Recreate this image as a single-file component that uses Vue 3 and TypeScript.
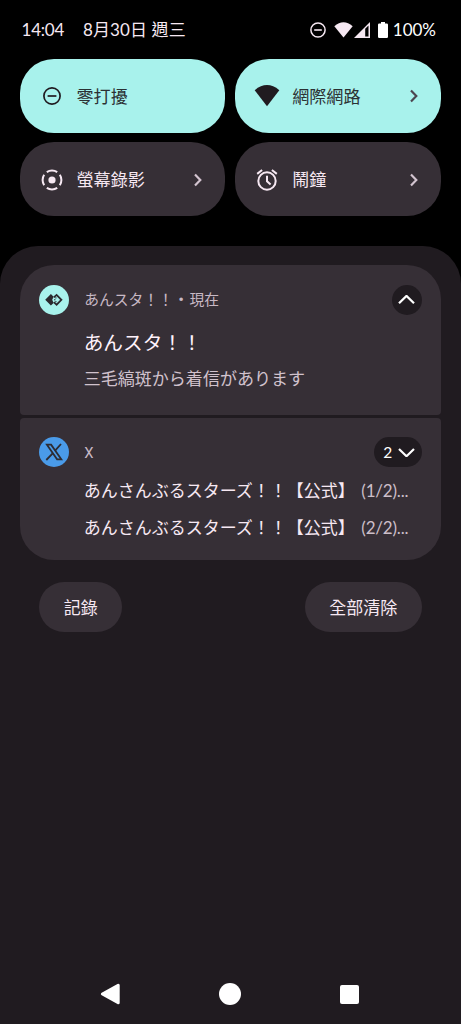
<script setup lang="ts">
interface Tile {
  label: string
  icon: 'dnd' | 'wifi' | 'record' | 'alarm'
  active: boolean
  expandable: boolean
}

interface Message {
  sender: string
  text: string
}

const tiles: Tile[] = [
  { label: '零打擾', icon: 'dnd', active: true, expandable: false },
  { label: '網際網路', icon: 'wifi', active: true, expandable: true },
  { label: '螢幕錄影', icon: 'record', active: false, expandable: true },
  { label: '鬧鐘', icon: 'alarm', active: false, expandable: true },
]

const messages: Message[] = [
  { sender: 'あんさんぶるスターズ！！【公式】', text: '(1/2)...' },
  { sender: 'あんさんぶるスターズ！！【公式】', text: '(2/2)...' },
]
</script>

<template>
  <div class="screen">
    <header class="status">
      <span class="clock">14:04</span>
      <span class="date" lang="zh-TW">8月30日 週三</span>
      <div class="indicators">
        <svg class="s-dnd" width="16" height="16" viewBox="0 0 16 16">
          <circle cx="8" cy="8" r="7.1" fill="none" stroke="currentColor" stroke-width="1.5" />
          <path d="M4.2 8h7.6" stroke="currentColor" stroke-width="1.6" />
        </svg>
        <svg class="s-wifi" width="19" height="16" viewBox="0 0 19 16">
          <path d="M.3 4.2Q9.5-3.6 18.7 4.2L9.5 15.6z" fill="currentColor" />
        </svg>
        <svg class="s-cell" width="16" height="16" viewBox="0 0 16 16">
          <path fill-rule="evenodd" d="M0 16 16 0v16zM11.2 6.7v7.8h3.3V3.6z" fill="currentColor" />
        </svg>
        <svg class="s-batt" width="10" height="16" viewBox="0 0 10 16">
          <path d="M3 0h4v1.6h1.8q1.2 0 1.2 1.2v12q0 1.2-1.2 1.2H1.2Q0 16 0 14.8v-12q0-1.2 1.2-1.2H3z" fill="currentColor" />
        </svg>
        <span class="percent">100%</span>
      </div>
    </header>

    <section class="tiles" lang="zh-TW">
      <div v-for="tile in tiles" :key="tile.label" class="tile" :class="{ active: tile.active }">
        <svg class="tile-icon" width="26" height="24" viewBox="0 0 26 24">
          <g v-if="tile.icon === 'dnd'" fill="none" stroke="currentColor" stroke-width="1.7">
            <circle cx="13" cy="12" r="8.1" />
            <path d="M8.6 12h8.8" />
          </g>
          <path v-else-if="tile.icon === 'wifi'" d="M.7 6.2Q13-4 25.3 6.2L13 22.3z" fill="currentColor" />
          <g v-else-if="tile.icon === 'record'" fill="none" stroke="currentColor" stroke-width="2">
            <circle cx="13" cy="12" r="3.6" fill="currentColor" stroke="none" />
            <circle cx="13" cy="12" r="9.4" pathLength="80" stroke-dasharray="15 5" stroke-dashoffset="7.5" />
          </g>
          <g v-else fill="none" stroke="currentColor" stroke-width="2">
            <circle cx="13" cy="13" r="8.7" />
            <path d="M13 7.8v5.4l3.6 3.3" />
            <path d="M3.2 5.9 8.1 2M22.8 5.9 17.9 2" />
          </g>
        </svg>
        <span class="tile-label">{{ tile.label }}</span>
        <svg v-if="tile.expandable" class="tile-arrow" width="8" height="14" viewBox="0 0 8 14">
          <path d="M1 1.6 6.3 7 1 12.4" fill="none" stroke="currentColor" stroke-width="2.2" />
        </svg>
      </div>
    </section>

    <main class="shade">
      <article class="card first" lang="ja">
        <div class="card-head">
          <svg class="app-icon" width="30" height="30" viewBox="0 0 30 30">
            <circle cx="15" cy="15" r="15" fill="#a8f2ec" />
            <path d="M6.2 14.8 11.9 9l2.7 2.7-1.4 3.1 1.4 3.1-2.7 2.7z" fill="#2b292e" />
            <path d="M14.8 12.4 17.6 9.9 22.4 14.8 17.6 19.7 14.8 17.2" fill="none" stroke="#2b292e" stroke-width="1.8" />
            <path d="M15 14.8h1.5M16.2 12.9h1.3M16.2 16.7h1.3" stroke="#2b292e" stroke-width="1" />
          </svg>
          <span class="app-name">あんスタ！！<span class="dot">•</span>現在</span>
          <div class="toggle round">
            <svg width="17" height="10" viewBox="0 0 17 10">
              <path d="M1 8.3 8.5 .9 16 8.3" fill="none" stroke="currentColor" stroke-width="2.2" />
            </svg>
          </div>
        </div>
        <h2 class="title">あんスタ！！</h2>
        <p class="body">三毛縞斑から着信があります</p>
      </article>

      <article class="card last" lang="ja">
        <div class="card-head">
          <svg class="app-icon" width="30" height="30" viewBox="0 0 30 30">
            <circle cx="15" cy="15" r="15" fill="#4a9be9" />
            <path d="M7.9 7.7h4.2L22.3 22.3h-4.2z" fill="none" stroke="#2d2c33" stroke-width="1.8" />
            <path d="M22 7 16.1 13.7M13.7 16.4 7.3 23" stroke="#2d2c33" stroke-width="1.8" />
          </svg>
          <span class="app-name latin">X</span>
          <div class="toggle pill">
            <span>2</span>
            <svg width="17" height="10" viewBox="0 0 17 10">
              <path d="M1 2 8.5 9.2 16 2" fill="none" stroke="currentColor" stroke-width="2.2" />
            </svg>
          </div>
        </div>
        <div class="messages">
          <div v-for="message in messages" :key="message.text" class="message">
            <span class="sender">{{ message.sender }}</span>
            <span class="snippet">{{ message.text }}</span>
          </div>
        </div>
      </article>

      <div class="actions" lang="zh-TW">
        <button class="action history">記錄</button>
        <button class="action clear">全部清除</button>
      </div>

      <nav class="nav">
        <svg width="20" height="22" viewBox="0 0 20 22">
          <path d="M2.4 11 18.2 2.2v17.6z" fill="#fff" stroke="#fff" stroke-width="3" stroke-linejoin="round" />
        </svg>
        <svg width="22" height="22" viewBox="0 0 22 22"><circle cx="11" cy="11" r="11" fill="#fff" /></svg>
        <svg width="19" height="19" viewBox="0 0 19 19"><rect width="19" height="19" rx="2" fill="#fff" /></svg>
      </nav>
    </main>
  </div>
</template>

<style>
body {
  background: #000;
}
</style>

<style scoped>
.screen {
  width: 461px;
  height: 1024px;
  overflow: hidden;
  display: flex;
  flex-direction: column;
  background: #000;
  color: #f6e8f2;
  font-family: Lato, "Noto Sans CJK TC", sans-serif;
  font-size: 17px;
}
svg {
  display: block;
  flex: none;
}
.status {
  flex: none;
  height: 59px;
  box-sizing: border-box;
  padding: 0 25px 0 21.5px;
  display: flex;
  align-items: center;
  white-space: nowrap;
}
.clock {
  width: 61.5px;
  letter-spacing: -0.2px;
}
.date {
  letter-spacing: 0.1px;
  padding-bottom: 2px;
}
.indicators {
  margin-left: auto;
  display: flex;
  align-items: center;
}
.s-wifi {
  margin-left: 8px;
}
.s-cell {
  margin-left: 1px;
}
.s-batt {
  margin-left: 8px;
  color: #fff;
}
.percent {
  margin-left: 5px;
  color: #fff;
}
.tiles {
  flex: none;
  display: grid;
  grid-template-columns: 205.8px 205.8px;
  grid-auto-rows: 73.6px;
  gap: 9.9px;
  padding: 0 19.5px;
}
.tile {
  box-sizing: border-box;
  border-radius: 34px;
  background: #362f36;
  color: #f6e8f2;
  display: flex;
  align-items: center;
  padding: 0.6px 23px 0 19px;
}
.tile.active {
  background: #a8f2ec;
  color: #201b20;
}
.tile-label {
  margin-left: 12px;
  padding-top: 1px;
  line-height: 24px;
  font-size: 17.1px;
}
.tile.active .tile-label {
  color: #2b3033;
}
.tile-arrow {
  margin-left: auto;
  color: #d3c4d0;
}
.tile.active .tile-arrow {
  color: #4c4650;
}
.shade {
  margin-top: 29.9px;
  flex: 1;
  display: flex;
  flex-direction: column;
  box-sizing: border-box;
  padding: 19px 19.7px 0;
  border-radius: 38px 38px 0 0;
  background: #201b20;
  font-family: Lato, "Noto Sans CJK JP", sans-serif;
}
.card {
  flex: none;
  box-sizing: border-box;
  background: #362f36;
  padding: 19.6px 19.5px 0;
}
.first {
  height: 150.5px;
  border-radius: 34px 34px 4px 4px;
}
.last {
  margin-top: 2.5px;
  height: 142px;
  border-radius: 4px 4px 34px 34px;
  padding-top: 19.2px;
}
.card-head {
  height: 30px;
  display: flex;
  align-items: center;
}
.app-name {
  margin-left: 15px;
  padding-bottom: 2px;
  font-size: 14.8px;
  color: #c8b9c5;
}
.dot {
  display: inline-block;
  width: 16.5px;
  text-align: center;
  font-family: Roboto, sans-serif;
  font-size: 17px;
  line-height: 1;
}
.latin {
  padding: 1px 0 0;
  font-family: Roboto, sans-serif;
}
.toggle {
  margin-left: auto;
  height: 30px;
  border-radius: 15px;
  background: #201b20;
  color: #fff;
  display: flex;
  align-items: center;
  justify-content: center;
  gap: 6px;
}
.round {
  width: 30px;
}
.pill {
  box-sizing: border-box;
  width: 48px;
  padding-left: 3px;
  font-size: 15.5px;
}
.title {
  margin: 13.4px 0 0 44.5px;
  font-size: 19.7px;
  line-height: 30px;
  font-weight: 400;
  color: #fff2fb;
}
.body {
  margin: 8px 0 0 44.5px;
  font-size: 17.05px;
  line-height: 26px;
  color: #d1c2cd;
}
.messages {
  margin: 5.8px 0 0 44.5px;
}
.message {
  height: 36.7px;
  line-height: 36.7px;
  display: flex;
  white-space: nowrap;
}
.snippet {
  margin-left: 6.5px;
  letter-spacing: -0.2px;
  color: #cdbfc9;
}
.actions {
  flex: none;
  margin: 22.2px 19.5px 0;
  display: flex;
  justify-content: space-between;
}
.action {
  height: 49.6px;
  border: 0;
  padding: 0 0 0.6px;
  border-radius: 25px;
  background: #362f36;
  color: #f6e8f2;
  font-family: "Noto Sans CJK TC", sans-serif;
  font-size: 17px;
}
.history {
  width: 83px;
}
.clear {
  width: 117px;
}
.nav {
  margin-top: auto;
  height: 59.2px;
  padding: 0 82px 0 80.5px;
  display: flex;
  align-items: center;
  justify-content: space-between;
}
</style>
